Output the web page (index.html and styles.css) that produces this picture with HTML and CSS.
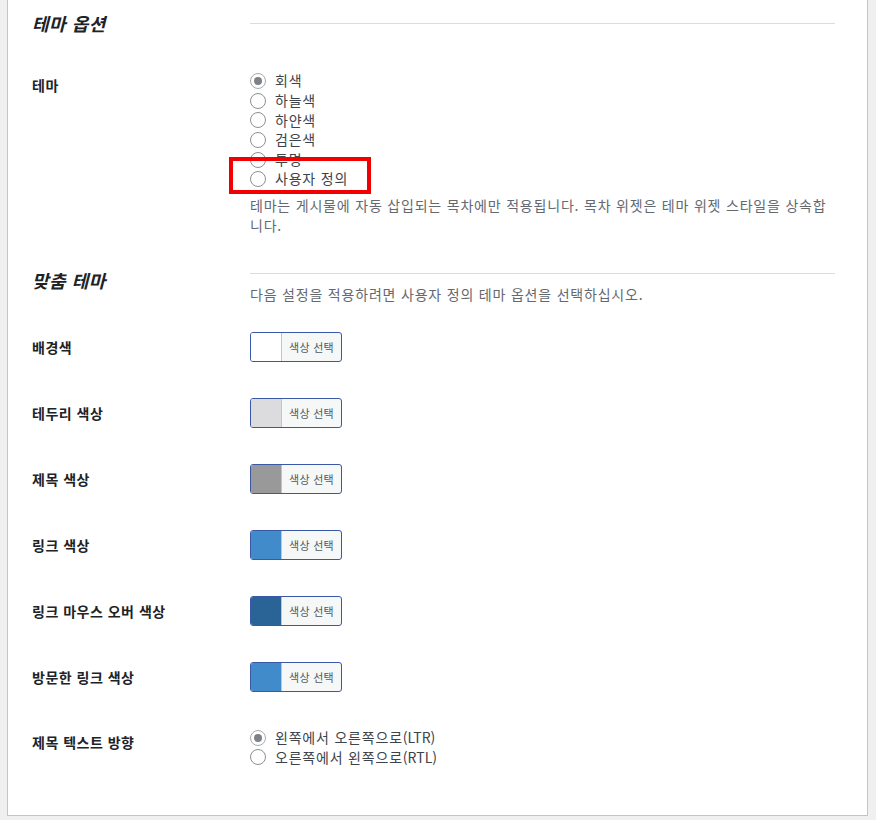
FILE: index.html
```html
<!DOCTYPE html>
<html lang="ko">
    <head>
        <meta charset="utf-8">
        <title>테마 옵션</title>
        <link rel="stylesheet" href="styles.css">
    </head>
    <body>
        <div class="panel">

                <!-- theme options -->

            <div class="section-head">
                <h2 class="title">테마 옵션</h2>
                <div class="line"></div>
            </div>

            <div class="row row-top">
                <div class="label">테마</div>
                <div class="field">
                    <div class="radios">
                        <label class="radio"><input type="radio" name="theme" checked disabled> 회색</label>
                        <label class="radio"><input type="radio" name="theme"> 하늘색</label>
                        <label class="radio"><input type="radio" name="theme"> 하얀색</label>
                        <label class="radio"><input type="radio" name="theme"> 검은색</label>
                        <label class="radio"><input type="radio" name="theme"> 투명</label>
                        <label class="radio"><input type="radio" name="theme"> 사용자 정의</label>
                        <div class="mark"></div>
                    </div>
                    <p class="desc">테마는 게시물에 자동 삽입되는 목차에만 적용됩니다. 목차 위젯은 테마 위젯 스타일을 상속합니다.</p>
                </div>
            </div>

                <!-- custom theme -->

            <div class="section-head second">
                <h2 class="title">맞춤 테마</h2>
                <div>
                    <div class="line"></div>
                    <p class="desc">다음 설정을 적용하려면 사용자 정의 테마 옵션을 선택하십시오.</p>
                </div>
            </div>

            <div class="colors">
                <div class="row row-color">
                    <div class="label">배경색</div>
                    <button class="color-btn"><span class="swatch" style="background:#ffffff"></span><span class="btn-text">색상 선택</span></button>
                </div>
                <div class="row row-color">
                    <div class="label">테두리 색상</div>
                    <button class="color-btn"><span class="swatch" style="background:#dcdcde"></span><span class="btn-text">색상 선택</span></button>
                </div>
                <div class="row row-color">
                    <div class="label">제목 색상</div>
                    <button class="color-btn"><span class="swatch" style="background:#999999"></span><span class="btn-text">색상 선택</span></button>
                </div>
                <div class="row row-color">
                    <div class="label">링크 색상</div>
                    <button class="color-btn"><span class="swatch" style="background:#428bca"></span><span class="btn-text">색상 선택</span></button>
                </div>
                <div class="row row-color">
                    <div class="label">링크 마우스 오버 색상</div>
                    <button class="color-btn"><span class="swatch" style="background:#2a6496"></span><span class="btn-text">색상 선택</span></button>
                </div>
                <div class="row row-color">
                    <div class="label">방문한 링크 색상</div>
                    <button class="color-btn"><span class="swatch" style="background:#428bca"></span><span class="btn-text">색상 선택</span></button>
                </div>
            </div>

            <div class="row row-top direction">
                <div class="label">제목 텍스트 방향</div>
                <div class="radios">
                    <label class="radio"><input type="radio" name="dir" checked disabled> 왼쪽에서 오른쪽으로<span class="latin">(LTR)</span></label>
                    <label class="radio"><input type="radio" name="dir"> 오른쪽에서 왼쪽으로<span class="latin">(RTL)</span></label>
                </div>
            </div>

        </div>
    </body>
</html>
```

FILE: styles.css
```css
body {
    margin: 0;
    background-color: #f0f0f1;
    font-family: "Noto Sans CJK KR", "Noto Sans", sans-serif;
    font-size: 14px;
    color: #3c434a;
}

.panel {
    margin: 0 8px 4px 7px;
    background-color: #fff;
    border: 1px solid #c3c4c7;
    border-top: none;
    padding: 12px 32px 48px 24px;
}

    /*section headings*/

.section-head {
    display: grid;
    grid-template-columns: 218px 1fr;
    align-items: center;
}

.section-head.second {
    align-items: start;
    margin-top: 34px;
}

h2.title {
    margin: 0;
    font-size: 18px;
    line-height: 1.3;
    font-weight: 700;
    font-style: italic;
    letter-spacing: 0.5px;
    color: #1d2327;
}

.line {
    height: 1px;
    background-color: #dcdcde;
}

.second .line {
    margin-top: 4px;
    margin-bottom: 10px;
}

    /*rows*/

.row {
    display: grid;
    grid-template-columns: 218px 1fr;
}

.row-top {
    margin-top: 36px;
    align-items: start;
}

.label {
    font-weight: 600;
    color: #1d2327;
    line-height: 1.3;
    letter-spacing: 0.5px;
    padding-top: 5px;
}

.row-color {
    height: 66px;
    align-items: center;
}

.row-color .label {
    padding-top: 0;
}

.colors {
    margin-top: 10px;
}

.direction {
    margin-top: 18px;
}

    /*radios*/

.radios {
    position: relative;
}

label.radio {
    display: flex;
    align-items: center;
    height: 19.6px;
    line-height: 19.6px;
    letter-spacing: 0.8px;
}

label.radio .latin {
    letter-spacing: 0;
}

label.radio input {
    appearance: none;
    -webkit-appearance: none;
    width: 16px;
    height: 16px;
    margin: 0 9px 0 0;
    border: 1px solid #8c8f94;
    border-radius: 50%;
    background-color: #fff;
    display: flex;
    align-items: center;
    justify-content: center;
}

label.radio input:checked {
    border-color: #a7aaad;
}

label.radio input:checked::before {
    content: "";
    width: 8px;
    height: 8px;
    border-radius: 50%;
    background-color: #7e8187;
}

.mark {
    position: absolute;
    left: -21px;
    top: 86px;
    width: 134px;
    height: 29px;
    border: 4px solid #f00000;
}

p.desc {
    margin: 6px 0 0 0;
    line-height: 20px;
    letter-spacing: 0.8px;
    color: #646970;
}

.second p.desc {
    margin: 0;
}

    /*color picker buttons*/

button.color-btn {
    display: flex;
    width: 92px;
    height: 30px;
    padding: 0;
    border: 1px solid #3b57a8;
    border-radius: 3px;
    background-color: #f6f7f7;
    overflow: hidden;
    cursor: pointer;
    font-family: inherit;
}

.swatch {
    width: 30px;
    height: 100%;
    border-right: 1px solid #c3c4c7;
}

.btn-text {
    flex: 1;
    font-size: 11px;
    line-height: 28px;
    letter-spacing: 0.3px;
    color: #50575e;
    text-align: center;
}
```
